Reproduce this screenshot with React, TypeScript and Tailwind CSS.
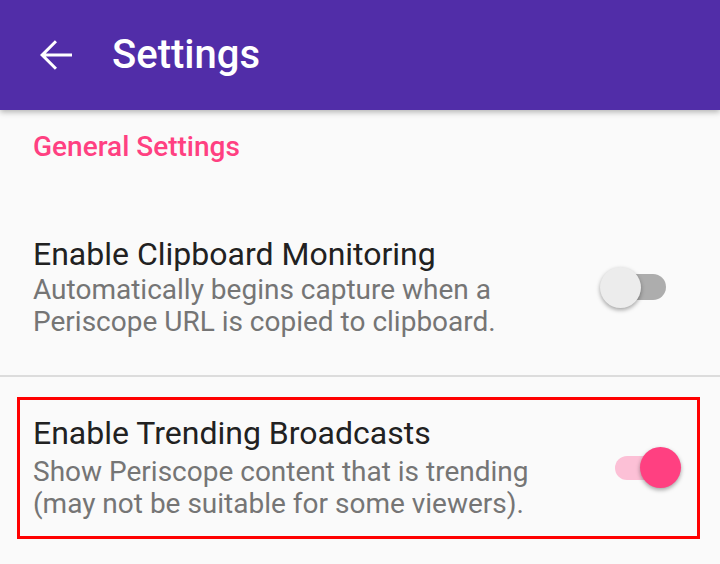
import React, { useState } from "react";

const Toggle = ({ on, onClick }: { on: boolean; onClick: () => void }) => {
  return (
    <button
      onClick={onClick}
      className="relative w-[66px] h-[42px] flex items-center shrink-0"
    >
      <span
        className={
          on
            ? "absolute left-0 right-[2px] h-[24px] rounded-full bg-[#fcc0d6]"
            : "absolute left-[2px] right-0 h-[26px] rounded-full bg-[#adadad]"
        }
      />
      <span
        className={
          on
            ? "absolute right-0 w-[41px] h-[41px] rounded-full bg-[#ff4081] shadow-[0_2px_4px_rgba(0,0,0,0.35)]"
            : "absolute left-0 w-[41px] h-[41px] rounded-full bg-[#ececec] shadow-[0_2px_4px_rgba(0,0,0,0.35)]"
        }
      />
    </button>
  );
};

export default function App() {
  const [clipboard, setClipboard] = useState(false);
  const [trending, setTrending] = useState(true);

  return (
    <div className="w-[720px] h-[564px] bg-[#fafafa] overflow-hidden font-['Roboto',sans-serif]">
      <div className="h-[110px] bg-[#512da8] flex items-center shadow-[0_2px_6px_rgba(0,0,0,0.3)] relative z-10">
        <svg
          width="48"
          height="48"
          viewBox="0 0 24 24"
          className="ml-[32px]"
          fill="white"
        >
          <path d="M20 11.25H6.9l5.6-5.6L11.45 4.6 4 12l7.45 7.4 1.05-1.05-5.6-5.6H20v-1.5z" />
        </svg>
        <h1 className="ml-[32px] text-white text-[40px] font-medium leading-none">
          Settings
        </h1>
      </div>

      <div className="h-[74px] flex items-center px-[33px]">
        <span className="text-[#ff4081] text-[28px] font-medium">
          General Settings
        </span>
      </div>

      <div className="flex items-center pl-[33px] pr-[54px] pt-[52px] pb-[37px]">
        <div className="flex-1">
          <div className="text-[32px] leading-[36px] text-[#212121]">
            Enable Clipboard Monitoring
          </div>
          <div className="mt-[2px] text-[28px] leading-[32px] text-[#757575]">
            Automatically begins capture when a
            <br />
            Periscope URL is copied to clipboard.
          </div>
        </div>
        <Toggle on={clipboard} onClick={() => setClipboard(!clipboard)} />
      </div>

      <div className="h-[2px] bg-[#dcdcdc]" />

      <div className="ml-[17px] mr-[20px] mt-[20px] border-[3px] border-[#ff0000] flex items-center pl-[13px] pr-[16px] pt-[15px] pb-[16px]">
        <div className="flex-1">
          <div className="text-[32px] leading-[36px] text-[#212121]">
            Enable Trending Broadcasts
          </div>
          <div className="mt-[5px] text-[28px] leading-[32px] text-[#757575]">
            Show Periscope content that is trending
            <br />
            (may not be suitable for some viewers).
          </div>
        </div>
        <Toggle on={trending} onClick={() => setTrending(!trending)} />
      </div>
    </div>
  );
}
